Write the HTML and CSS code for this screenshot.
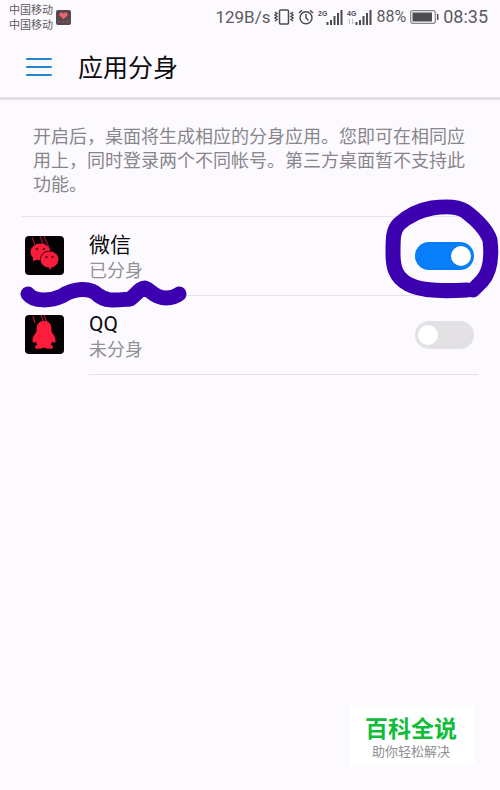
FILE: index.html
```html
<!DOCTYPE html>
<html lang="zh-CN">
<head>
<meta charset="utf-8">
<meta name="viewport" content="width=device-width, initial-scale=1">
<title>应用分身</title>
<link rel="stylesheet" href="styles.css">
</head>
<body>
<div class="status">
  <div class="carriers"><span>中国移动</span><span>中国移动</span></div>
  <svg class="notice" width="15" height="15" viewBox="0 0 15 15" aria-hidden="true">
    <rect width="15" height="15" rx="2" fill="#59494f"/>
    <path d="M7.500 9 3.500 5.400C3 2.500 5.500 1.500 7.500 3.500 9.500 1.500 12 2.500 11.500 5.400Z" fill="#ee6470"/>
    <path d="M2 12.500 4 11M6 13l2-2M10 12.500 12.500 11" stroke="#85666d" stroke-width="1"/>
  </svg>
  <div class="indicators">
    <span class="speed">129B/s</span>
    <svg class="vibrate" width="20" height="16" viewBox="0 0 20 16" fill="none" stroke="#4c4b50" aria-hidden="true">
      <rect x="5.500" y="1" width="9" height="14" rx="1" stroke-width="1.500"/>
      <path d="M1 3l2 1.500-2 1.500 2 1.500L1 9l2 1.500L1 12M19 3l-2 1.500 2 1.500-2 1.500L19 9l-2 1.500 2 1.500" stroke-width="1.500"/>
    </svg>
    <svg class="alarm" width="16" height="16" viewBox="0 0 16 16" fill="none" stroke="#4c4b50" stroke-width="1.500" aria-hidden="true">
      <circle cx="8" cy="8.700" r="6"/>
      <path d="M8 5v4l2.500 2.500M1 4 4 1.200M15 4 12 1.200"/>
    </svg>
    <svg class="signal" width="25" height="18" viewBox="0 0 25 18" aria-hidden="true">
      <text class="net" x="0" y="8">2G</text>
      <path d="M9.500 17v-3M13 17v-5M16.500 17V8M20 17V5M23.500 17V2" stroke="#4c4b50" stroke-width="2"/>
    </svg>
    <svg class="signal" width="25" height="18" viewBox="0 0 25 18" aria-hidden="true">
      <text class="net" x="0" y="8">4G</text>
      <path d="M2.500 11v5M1 12.500 2.500 11M5.500 11v5M7 14.500 5.500 16" stroke="#c3c2c6" fill="none"/>
      <path d="M9.500 17v-3M13 17v-5M16.500 17V8M20 17V5M23.500 17V2" stroke="#4c4b50" stroke-width="2"/>
    </svg>
    <span class="percent">88%</span>
    <svg class="battery" width="29" height="14" viewBox="0 0 29 14" aria-hidden="true">
      <rect x=".7" y=".7" width="24.600" height="12.600" rx="2" fill="none" stroke="#858489" stroke-width="1.200"/>
      <rect x="2.500" y="2.500" width="19.500" height="9" fill="#4c4b50"/>
      <path d="M27.700 4v6" stroke="#4c4b50" stroke-width="1.500"/>
    </svg>
    <time class="clock">08:35</time>
  </div>
</div>

<header class="bar">
  <button class="menu" type="button" aria-label="菜单">
    <svg width="26" height="20" viewBox="0 0 26 20" aria-hidden="true"><path d="M1 2h24M1 10h24M1 18h24" stroke="#2586cf" stroke-width="2" stroke-linecap="round"/></svg>
  </button>
  <h1 class="title">应用分身</h1>
</header>

<main class="content">
  <p class="intro">开启后，桌面将生成相应的分身应用。您即可在相同应用上，同时登录两个不同帐号。第三方桌面暂不支持此功能。</p>
  <ul class="apps">
    <li class="app">
      <svg class="icon" width="39" height="39" viewBox="0 0 39 39" aria-hidden="true">
        <rect width="39" height="39" rx="4" fill="#050204"/>
        <path d="M7 1l3 8M15 0l4 11M19 0l5 12" stroke="#8e1528" stroke-width="1.300"/>
        <path d="M8 20l0 5 6-2z" fill="#fb1d3b"/>
        <ellipse cx="15.500" cy="16" rx="10" ry="8.500" fill="#fb1d3b"/>
        <ellipse cx="24.500" cy="23.500" rx="9.300" ry="8.500" fill="#fb1d3b" stroke="#300811" stroke-width="1"/>
        <path d="M23.500 31l2 3 1-3z" fill="#fb1d3b"/>
        <g fill="#64101d"><circle cx="12" cy="13" r="1.300"/><circle cx="19" cy="13" r="1.300"/><circle cx="21.500" cy="21" r="1.200"/><circle cx="27.500" cy="21" r="1.200"/></g>
      </svg>
      <div class="names">
        <label class="name" for="wechat">微信</label>
        <span class="state">已分身</span>
      </div>
      <input class="switch" type="checkbox" id="wechat" checked>
      <svg class="mark wave" width="168" height="32" viewBox="20 278 168 32" aria-hidden="true">
        <path d="M28 294C34 302 51 301 62 296C74 288 90 287 98 295C106 302 117 300 130 299C136 295 140 288 145 288C151 290 154 298 166 298Q174 298 179 294"/>
      </svg>
      <svg class="mark ring" width="116" height="100" viewBox="384 199 116 100" aria-hidden="true">
        <path d="M467 290C449 291 422 292 408 284C395 277 393 266 393 253C393 238 393 230 399 224C408 216 420 210 432 208C446 206 457 206 465 211C477 220 487 231 490 240C492 257 491 271 482 281L473 290"/>
      </svg>
    </li>
    <li class="app">
      <svg class="icon" width="39" height="39" viewBox="0 0 39 39" aria-hidden="true">
        <rect width="39" height="39" rx="4" fill="#050204"/>
        <path d="M8 1l2 7M16 0l3 8M19 0l3 8" stroke="#a31a2e" stroke-width="1.300"/>
        <path d="M19 6C14 6 11.500 9.500 11.500 14V17C9 20 7 23 7.500 26.500Q8.500 29 10.500 26.500Q11 28 12.500 29.500Q9 31 10.500 33.500Q16 34.500 19 32.500Q22 34.500 27.500 33.500Q29 31 25.500 29.500Q27 28 27.500 26.500Q30 29 30.500 26.500C31 23 29 20 26.500 17V14C26.500 9.500 24 6 19 6Z" fill="#fb1d3b"/>
      </svg>
      <div class="names">
        <label class="name" for="qq">QQ</label>
        <span class="state">未分身</span>
      </div>
      <input class="switch" type="checkbox" id="qq">
    </li>
  </ul>
</main>

<aside class="stamp">
  <strong class="brand">百科全说</strong>
  <span class="slogan">助你轻松解决</span>
</aside>
</body>
</html>
```
FILE: styles.css
```css
* {
  box-sizing: border-box;
}

body {
  margin: 0;
  min-height: 100vh;
  display: flex;
  flex-direction: column;
  background: #fcfafe;
  color: #0c0b0e;
  font-family: Roboto, "Noto Sans CJK SC", sans-serif;
}

svg {
  display: block;
  flex: none;
}

.status {
  display: flex;
  align-items: center;
  height: 34px;
  padding: 0 12px 0 9px;
  color: #5c5b60;
}

.carriers {
  display: flex;
  flex-direction: column;
  padding-top: 2px;
  font-size: 11px;
  line-height: 15px;
}

.notice {
  margin-left: 3px;
}

.indicators {
  display: flex;
  align-items: center;
  gap: 4px;
  margin-left: auto;
  line-height: 20px;
}

.speed,
.percent {
  font-size: 16px;
}

.speed {
  font-size: 17px;
}

.clock {
  font-size: 18px;
}

.net {
  font-family: "Liberation Sans", sans-serif;
  font-size: 7px;
  font-weight: 700;
  fill: #4c4b50;
}

.bar {
  display: flex;
  align-items: center;
  gap: 26px;
  height: 66px;
  padding: 2px 26px 0;
  border-bottom: 3px solid #e1dfe3;
}

.menu {
  padding: 0;
  border: 0;
  background: none;
}

.title {
  margin: 0;
  padding-top: 4px;
  font-size: 25px;
  font-weight: 400;
  line-height: 36px;
}

.content {
  flex: 1;
  padding: 25px 22px 0;
}

.intro {
  margin: 0;
  padding: 0 11px;
  color: #88868c;
  font-size: 18px;
  line-height: 24px;
}

.apps {
  margin: 19px 0 0;
  padding: 0;
  list-style: none;
  border-top: 1px solid #e4e2e6;
}

.app {
  position: relative;
  display: flex;
  align-items: center;
  height: 79px;
  padding: 0 4px 2px 3px;
}

.app::after {
  content: "";
  position: absolute;
  left: 67px;
  right: 0;
  bottom: 0;
  height: 1px;
  background: #e4e2e6;
}

.names {
  display: flex;
  flex: 1;
  flex-direction: column;
  margin-left: 25px;
  padding-top: 5px;
}

.name {
  font-size: 21px;
  line-height: 26px;
}

.state {
  color: #929096;
  font-size: 18px;
  line-height: 26px;
}

.switch {
  appearance: none;
  display: flex;
  align-items: center;
  width: 59px;
  height: 28px;
  margin: 0;
  padding: 0 3px;
  border-radius: 14px;
  background: #e3e1e4;
}

.switch::before {
  content: "";
  width: 20px;
  height: 20px;
  border-radius: 50%;
  background: #fff;
}

.switch:checked {
  justify-content: flex-end;
  background: #087ff8;
}

.mark {
  position: absolute;
  z-index: 1;
  fill: none;
  stroke: #3d00b0;
  stroke-width: 15;
  stroke-linecap: round;
  stroke-linejoin: round;
  pointer-events: none;
}

.wave {
  left: -2px;
  top: 61px;
}

.ring {
  right: -22px;
  top: -18px;
}

.stamp {
  display: flex;
  flex-direction: column;
  align-items: center;
  align-self: flex-end;
  width: 125px;
  margin: 0 25px 25px 0;
  padding: 12px 3px 4px 0;
  background: #fff;
}

.brand {
  color: #10bd3a;
  font-size: 23px;
  font-weight: 700;
  line-height: 26px;
}

.slogan {
  color: #918f93;
  font-size: 13px;
  line-height: 18px;
}
```
